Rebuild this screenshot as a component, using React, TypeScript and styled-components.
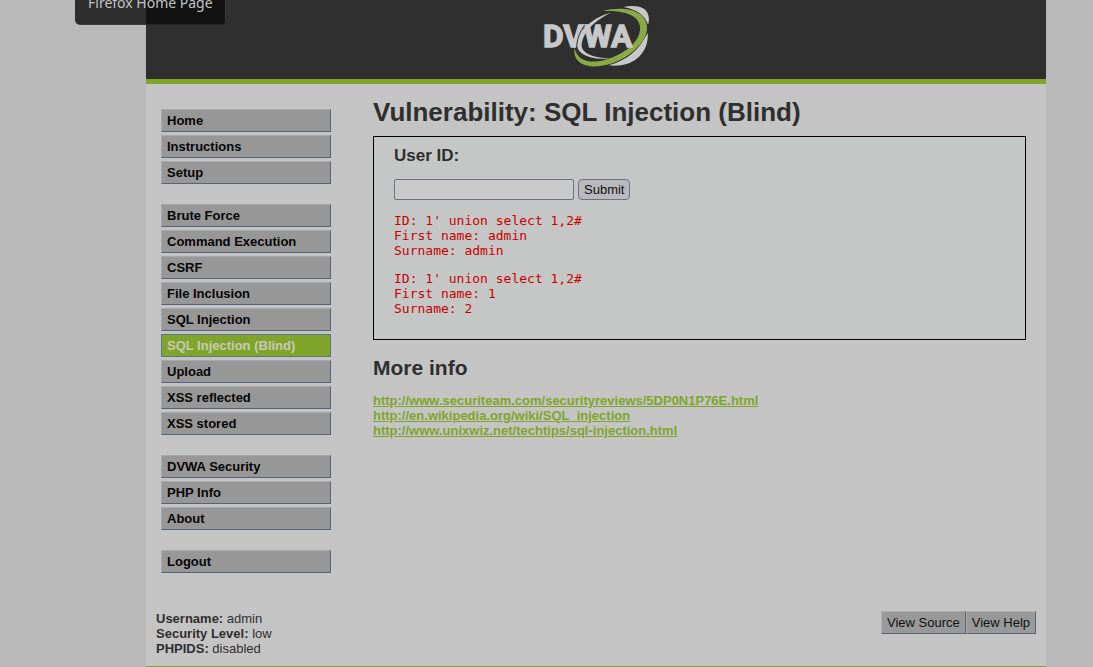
import React from "react";
import styled, { createGlobalStyle } from "styled-components";

const sans = `"Liberation Sans", Arial, sans-serif`;
const green = "#7fa42a";
const ink = "#2f2f2f";

const GlobalStyle = createGlobalStyle`
  * { box-sizing: border-box; }
  html { background: #b9b9b9; }
  body {
    margin: 0;
    color: ${ink};
    font: 13px/15px ${sans};
  }
  #root { padding-left: 99px; }
`;

const Tooltip = styled.div`
  position: absolute;
  top: -18px;
  left: 75px;
  padding: 8px 12px 9px 13px;
  border: 1px solid rgba(90, 90, 90, 0.3);
  border-width: 0 1px 1px 0;
  border-radius: 5px;
  background: linear-gradient(90deg, #2d2d2d 71px, #121212 71px);
  color: #c2c2c2;
  font: 14px/25px "Noto Sans", sans-serif;
  white-space: nowrap;
`;

const Container = styled.div`
  max-width: 900px;
  margin: 0 auto;
  background: #c4c4c4;
`;

const Header = styled.header`
  display: flex;
  justify-content: center;
  padding: 5px 0 10px;
  border-bottom: 5px solid ${green};
  background: #2f2f2f;
`;

const Columns = styled.div`
  display: flex;
  align-items: flex-start;
`;

const Menu = styled.nav`
  flex: none;
  width: 185px;
  padding: 25px 0 0 15px;
`;

const MenuGroup = styled.ul`
  display: flex;
  flex-direction: column;
  gap: 3px;
  margin: 0 0 20px;
  padding: 0;
  list-style: none;
`;

const MenuLink = styled.a<{ $active: boolean }>`
  display: block;
  padding: 3px 5px;
  border: 1px solid;
  border-color: ${(p) => (p.$active ? "#5f7287" : "#a8a8a8 #59627a #59627a #a8a8a8")};
  background: ${(p) => (p.$active ? green : "#979797")};
  color: ${(p) => (p.$active ? "#c8c8b8" : "#050505")};
  font-weight: bold;
  text-decoration: none;
`;

const Main = styled.main`
  flex: 1;
  min-width: 0;
  padding: 12px 20px 0 42px;
`;

const Title = styled.h1`
  margin: 0 0 8px;
  font-size: 26px;
  line-height: 32px;
`;

const Panel = styled.section`
  padding: 9px 20px 23px;
  border: 1px solid #000;
  background: #c5c7c6;
`;

const FieldTitle = styled.label`
  display: block;
  margin-bottom: 13px;
  font-size: 17px;
  font-weight: bold;
  line-height: 20px;
`;

const FieldRow = styled.div`
  display: flex;
  gap: 4px;
`;

const TextInput = styled.input`
  width: 180px;
  height: 21px;
  padding: 1px 2px;
  border: 1px solid #70707e;
  border-radius: 2px;
  background: #c9c9c9;
  font: 13px/15px ${sans};
`;

const SubmitButton = styled.button`
  height: 21px;
  padding: 0 5px;
  border: 1px solid #70707e;
  border-radius: 4px;
  background: #b9b9bd;
  color: #111;
  font: 13px/15px ${sans};
`;

const Result = styled.pre`
  margin: 13px 0 0;
  color: #cc0000;
  font: 13px/15px "DejaVu Sans Mono", monospace;
`;

const Subtitle = styled.h2`
  margin: 16px 0 13px;
  font-size: 21px;
  line-height: 24px;
`;

const LinkList = styled.ul`
  margin: 0;
  padding: 0;
  list-style: none;
`;

const InfoLink = styled.a`
  color: ${green};
  font-weight: bold;
`;

const SystemInfo = styled.div`
  display: flex;
  justify-content: space-between;
  align-items: flex-start;
  padding: 18px 10px 10px;
`;

const Buttons = styled.div`
  display: flex;
`;

const PlainButton = styled.button`
  padding: 3px 5px;
  border: 1px solid;
  border-color: #adadad #59627a #59627a #adadad;
  background: #999;
  color: #111;
  font: 13px/15px ${sans};
`;

const Footer = styled.footer`
  height: 1px;
  background: ${green};
`;

const groups = [
  ["Home", "Instructions", "Setup"],
  [
    "Brute Force",
    "Command Execution",
    "CSRF",
    "File Inclusion",
    "SQL Injection",
    "SQL Injection (Blind)",
    "Upload",
    "XSS reflected",
    "XSS stored",
  ],
  ["DVWA Security", "PHP Info", "About"],
  ["Logout"],
];

const results = [
  "ID: 1' union select 1,2#\nFirst name: admin\nSurname: admin",
  "ID: 1' union select 1,2#\nFirst name: 1\nSurname: 2",
];

const links = [
  "http://www.securiteam.com/securityreviews/5DP0N1P76E.html",
  "http://en.wikipedia.org/wiki/SQL_injection",
  "http://www.unixwiz.net/techtips/sql-injection.html",
];

const status = [
  ["Username:", "admin"],
  ["Security Level:", "low"],
  ["PHPIDS:", "disabled"],
];

const Logo = () => (
  <svg width="108" height="64" viewBox="0 0 324 192" role="img" aria-label="DVWA">
    <path
      d="M244 6 C282 -2 314 6 319 31 C322 43 321 50 318 59 C308 29 284 14 244 6Z"
      fill="#c8c8c8"
    />
    <path
      d="M317 83 C322 143 274 190 200 181 C255 165 291 137 317 83Z"
      fill="#c8c8c8"
    />
    <path
      d="M182 18 C240 3 311 12 315 65 C318 112 256 166 189 181 C138 191 92 178 97 128 C107 169 143 176 188 165 C250 148 299 107 294 64 C287 23 233 17 182 18Z"
      fill="#8aaa43"
    />
    <path
      d="M208 23 C158 34 106 75 105 121 C107 149 150 167 205 160 C155 160 118 144 119 121 C120 84 160 43 208 23Z"
      fill="#c8c8c8"
    />
    <text
      x="3"
      y="127"
      fill="#c8c8c8"
      stroke="#c8c8c8"
      strokeWidth="4"
      fontFamily="Roboto, sans-serif"
      fontSize="95"
      fontWeight="700"
    >
      DVWA
    </text>
    <path d="M104 130 C104 105 112 82 128 60" fill="none" stroke="#2f2f2f" strokeWidth="3" />
  </svg>
);

export default function App() {
  return (
    <>
      <GlobalStyle />
      <Container>
        <Header>
          <Logo />
        </Header>
        <Columns>
          <Menu>
            {groups.map((group) => (
              <MenuGroup key={group[0]}>
                {group.map((item) => (
                  <li key={item}>
                    <MenuLink href="#" $active={item === "SQL Injection (Blind)"}>
                      {item}
                    </MenuLink>
                  </li>
                ))}
              </MenuGroup>
            ))}
          </Menu>
          <Main>
            <Title>Vulnerability: SQL Injection (Blind)</Title>
            <Panel>
              <FieldTitle htmlFor="user-id">User ID:</FieldTitle>
              <FieldRow>
                <TextInput id="user-id" type="text" />
                <SubmitButton type="button">Submit</SubmitButton>
              </FieldRow>
              {results.map((text) => (
                <Result key={text}>{text}</Result>
              ))}
            </Panel>
            <Subtitle>More info</Subtitle>
            <LinkList>
              {links.map((url) => (
                <li key={url}>
                  <InfoLink href={url}>{url}</InfoLink>
                </li>
              ))}
            </LinkList>
          </Main>
        </Columns>
        <SystemInfo>
          <div>
            {status.map(([name, value]) => (
              <div key={name}>
                <b>{name}</b> {value}
              </div>
            ))}
          </div>
          <Buttons>
            <PlainButton type="button">View Source</PlainButton>
            <PlainButton type="button">View Help</PlainButton>
          </Buttons>
        </SystemInfo>
        <Footer />
      </Container>
      <Tooltip role="tooltip">Firefox Home Page</Tooltip>
    </>
  );
}
